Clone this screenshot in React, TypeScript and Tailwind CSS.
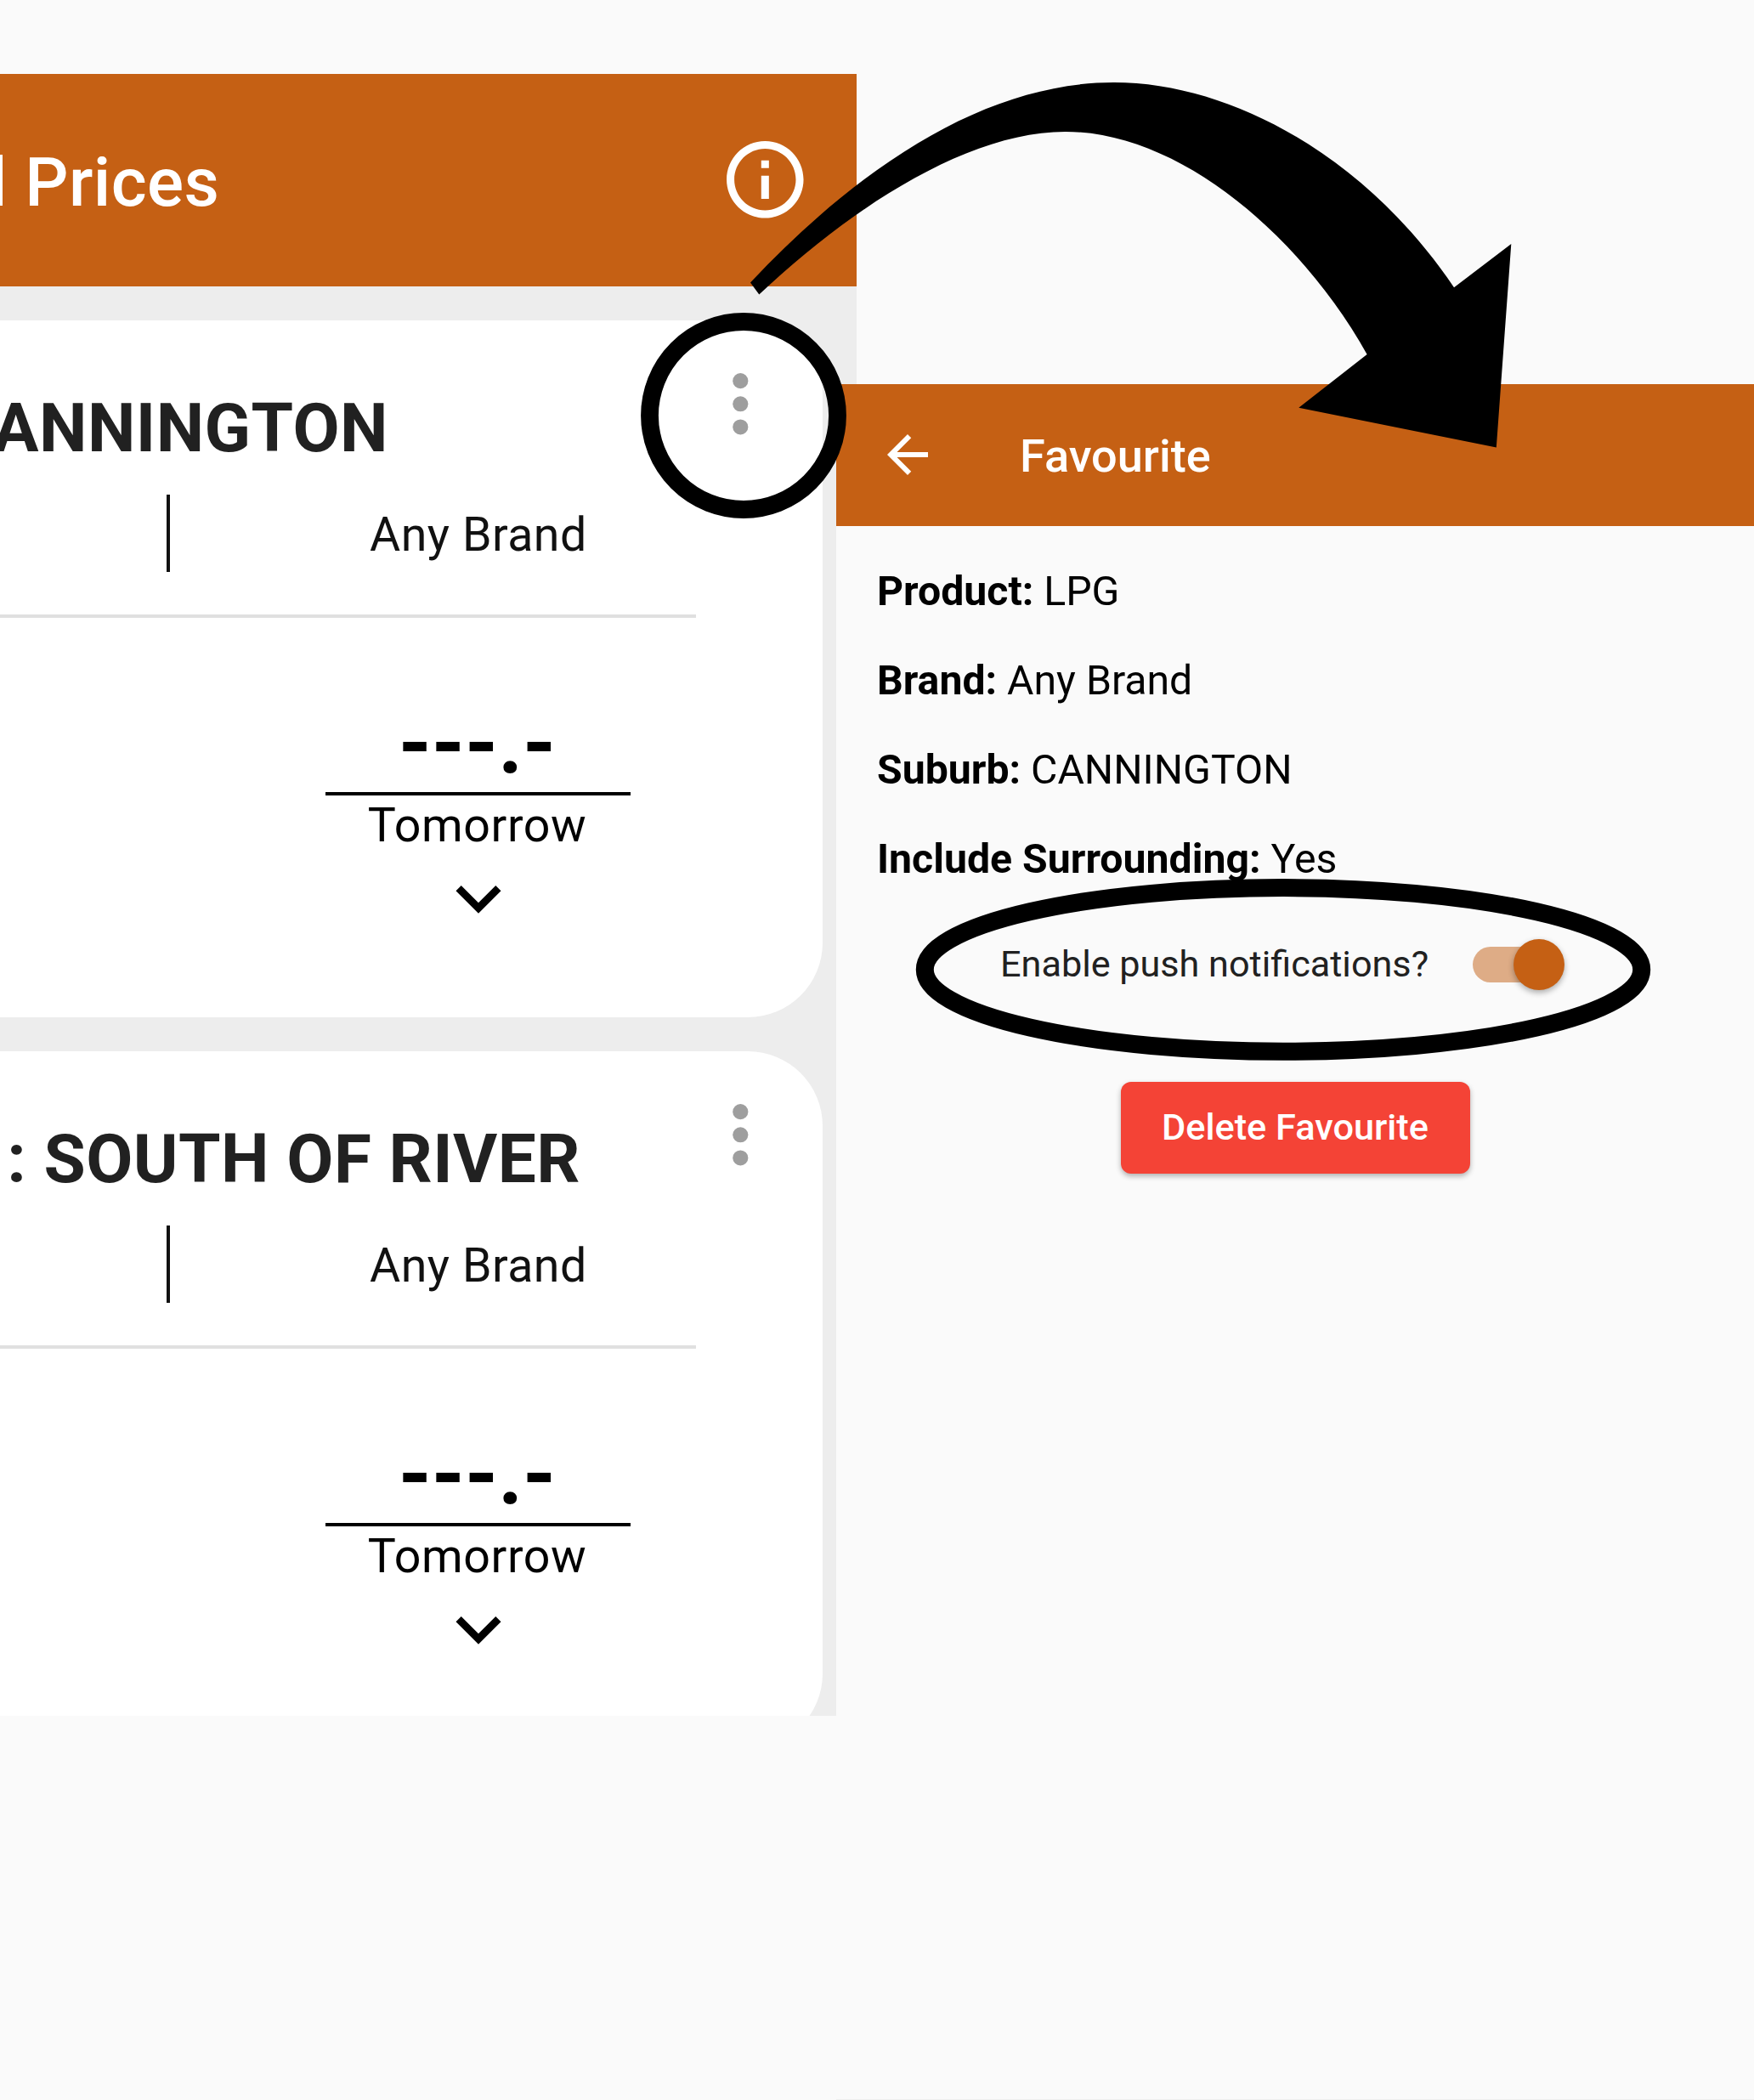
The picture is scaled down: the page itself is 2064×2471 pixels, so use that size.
import React from "react";

function InfoIcon() {
  return (
    <svg viewBox="0 0 24 24" className="-mt-px size-[108.6px] shrink-0 fill-white">
      <path d="M11 7h2v2h-2zm0 4h2v6h-2zm1-9C6.48 2 2 6.48 2 12s4.48 10 10 10 10-4.48 10-10S17.52 2 12 2zm0 18c-4.41 0-8-3.59-8-8s3.59-8 8-8 8 3.59 8 8-3.59 8-8 8z" />
    </svg>
  );
}

function MoreIcon() {
  return (
    <svg viewBox="0 0 24 24" className="mt-[44.3px] size-[108.6px] shrink-0 fill-[#9e9e9e]">
      <circle cx="12" cy="6" r="2" />
      <circle cx="12" cy="12" r="2" />
      <circle cx="12" cy="18" r="2" />
    </svg>
  );
}

function ChevronIcon() {
  return (
    <svg viewBox="0 0 24 24" className="size-[106px] fill-black">
      <path d="M16.59 8.59 12 13.17 7.41 8.59 6 10l6 6 6-6z" />
    </svg>
  );
}

function BackIcon() {
  return (
    <svg viewBox="0 0 24 24" className="-mt-px size-[72px] shrink-0 fill-white">
      <path d="M20 11H7.83l5.59-5.59L12 4l-8 8 8 8 1.41-1.41L7.83 13H20v-2z" />
    </svg>
  );
}

function PriceCard({ title, titleClass }: { title: string; titleClass: string }) {
  return (
    <article className="flex h-[820px] w-[967.5px] shrink-0 rounded-r-[88px] bg-white">
      <div className="w-[816.5px] shrink-0 pt-[87px]">
        <h2
          className={
            "flex h-20 justify-end text-[80px] leading-[80px] font-bold tracking-[0.45px] whitespace-nowrap text-[#212121] " +
            titleClass
          }
        >
          {title}
        </h2>
        <div className="mt-[38px] flex h-[91px] items-center">
          <div className="ml-[196px] h-full w-[4px] bg-[#111]" />
          <span className="ml-[235px] pt-[5px] text-[55.5px] leading-[64px] tracking-[0.5px] whitespace-nowrap text-[#111]">
            Any Brand
          </span>
        </div>
        <div className="mt-[49.5px] h-[4.5px] w-[818.5px] bg-[#e0e0e0]" />
        <div className="mt-[98px] ml-[383px] flex w-[359px] flex-col items-center text-black">
          <span className="h-[100px] pr-[2px] text-[99.5px] leading-[100px] font-bold">---.-</span>
          <div className="mt-[7px] h-[4px] w-full bg-black" />
          <span className="mt-1 h-16 pr-[2px] text-[55.5px] leading-[64px] tracking-[0.6px]">
            Tomorrow
          </span>
          <ChevronIcon />
        </div>
      </div>
      <MoreIcon />
    </article>
  );
}

function Detail({ label, value }: { label: string; value: string }) {
  return (
    <p className="h-[105px] text-[48.2px] leading-[105px] whitespace-nowrap text-black">
      <b className="font-bold">{label}</b> {value}
    </p>
  );
}

function Toggle() {
  return (
    <div className="flex h-[60px] w-[108px] items-center">
      <div className="h-[42px] w-[78px] rounded-l-full bg-[#deac86]" />
      <div className="-ml-[30px] size-[60px] shrink-0 rounded-full bg-[#c56014] shadow-[0_3px_7px_rgba(0,0,0,0.32)]" />
    </div>
  );
}

/* Hand-drawn style callouts that link the card menu to the notification switch. */
function Annotations() {
  return (
    <svg viewBox="0 0 2064 2471" className="pointer-events-none absolute inset-0 z-20 h-full w-full">
      <path d="M883 332.5C1022 185 1168 97 1310.7 97C1452 97 1610 188 1711 338.2L1778.3 286.9L1760.8 526.5L1528.3 479.8L1608.6 417C1532 280 1390 155 1253.6 155C1140 155 1003 243 893.3 346.6Z" />
      <circle cx="875" cy="489" r="110.5" fill="none" stroke="black" strokeWidth="20.8" />
      <ellipse cx="1510" cy="1140.9" rx="421.7" ry="96.3" fill="none" stroke="black" strokeWidth="21" />
    </svg>
  );
}

export default function App() {
  return (
    <main className="relative flex h-[2471px] w-[2064px] overflow-hidden bg-[#fafafa] font-[Roboto,sans-serif]">
      <section className="mt-[87px] flex h-[1932px] w-[1008px] shrink-0 flex-col overflow-hidden bg-[#ededed]">
        <header className="flex h-[250px] shrink-0 items-center justify-between bg-[#c56014] pr-[53.5px]">
          <h1 className="-ml-[12px] pt-[7px] text-[80.4px] leading-none font-medium tracking-[0.4px] whitespace-nowrap text-white">
            l Prices
          </h1>
          <InfoIcon />
        </header>
        <div className="flex flex-col gap-10 pt-10">
          <PriceCard title="ANNINGTON" titleClass="w-[457px]" />
          <PriceCard title=": SOUTH OF RIVER" titleClass="w-[683px]" />
        </div>
      </section>

      <section className="z-10 mt-[452px] -ml-6 flex h-[2019px] w-[1080px] shrink-0 flex-col border-b border-[#efefef] bg-[#fafafa]">
        <header className="flex h-[167px] shrink-0 items-center gap-24 bg-[#c56014] pl-12">
          <BackIcon />
          <h1 className="pt-[4px] text-[54.1px] leading-none font-medium text-white">Favourite</h1>
        </header>
        <div className="pt-6 pl-12">
          <Detail label="Product:" value="LPG" />
          <Detail label="Brand:" value="Any Brand" />
          <Detail label="Suburb:" value="CANNINGTON" />
          <Detail label="Include Surrounding:" value="Yes" />
        </div>
        <div className="mt-[42px] flex h-[60px] items-center pl-[193px]">
          <span className="w-[555.7px] text-[43.2px] leading-[60px] whitespace-nowrap text-[#212121]">
            Enable push notifications?
          </span>
          <Toggle />
        </div>
        <button className="mt-[108px] flex h-[108px] w-[411px] items-center justify-center self-center rounded-xl bg-[#f44336] pt-px text-[43.3px] font-medium whitespace-nowrap text-white shadow-[0_3px_6px_rgba(0,0,0,0.3)]">
          Delete Favourite
        </button>
      </section>

      <Annotations />
    </main>
  );
}
